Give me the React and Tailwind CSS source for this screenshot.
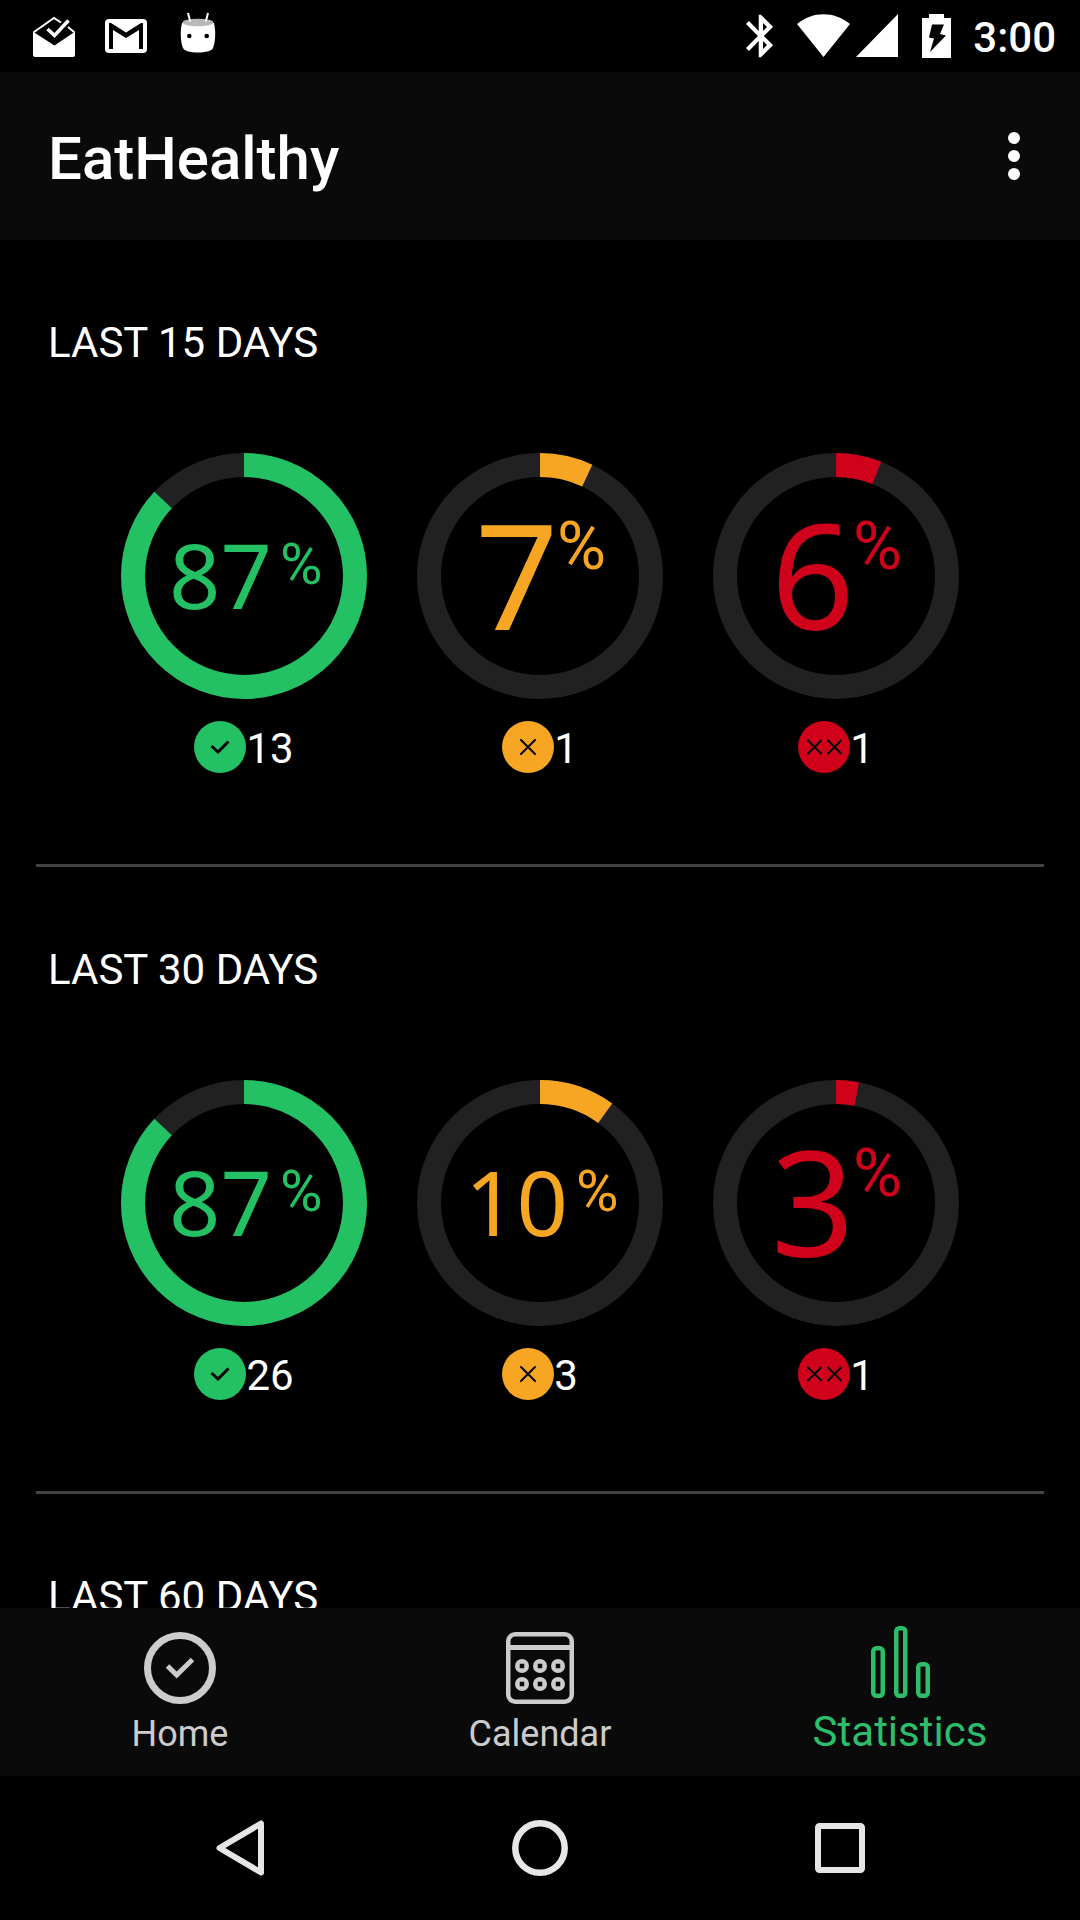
import React, { useState } from 'react';

const sections = [
    {
        title: 'LAST 15 DAYS',
        stats: [
            { type: 'good', percent: 87, count: 13 },
            { type: 'bad', percent: 7, count: 1 },
            { type: 'worse', percent: 6, count: 1 },
        ],
    },
    {
        title: 'LAST 30 DAYS',
        stats: [
            { type: 'good', percent: 87, count: 26 },
            { type: 'bad', percent: 10, count: 3 },
            { type: 'worse', percent: 3, count: 1 },
        ],
    },
    { title: 'LAST 60 DAYS', stats: [] },
];

const colors = {
    good: 'text-[#23c163]',
    bad: 'text-[#f7a624]',
    worse: 'text-[#d0021b]',
};

// Status bar on top of the screen
const StatusBar = () => (
    <div className="flex h-[72px] shrink-0 items-center justify-between bg-black pl-[33px] pr-6">
        <div className="flex gap-[30px]">
            <svg width="42" height="48" viewBox="0 0 42 48" fill="none">
                <path d="M0 19L2 21L21.5 33.5L40 21L42 19V43Q42 45 40 45H2Q0 45 0 43Z" fill="white" />
                <path d="M1 20L21 6L28 10.500M35 15L41 20" stroke="white" strokeWidth="2" />
                <path d="M14.500 17L21.500 23.500L35.500 8.500" stroke="white" strokeWidth="3.500" />
            </svg>
            <svg width="42" height="48" viewBox="0 0 42 48">
                <rect y="7" width="42" height="34" rx="4" fill="white" />
                <path d="M4 37V11H6L21 20.500L36 11H38V37H34V18L21 26L8 18V37Z" fill="black" />
            </svg>
            <svg width="42" height="48" viewBox="0 0 42 48">
                <path d="M5 11C3 19 3.500 30 6 36C8 42 34 42 36 36C38.500 30 39 19 37 11Z" fill="white" />
                <ellipse cx="21" cy="10.500" rx="15.500" ry="3.800" fill="#b8b8b8" />
                <path d="M11 1L13.200 9.500M31 1L28.800 9.500" stroke="white" strokeWidth="2" />
                <circle cx="12.300" cy="24" r="2.300" fill="black" />
                <circle cx="29.700" cy="24" r="2.300" fill="black" />
            </svg>
        </div>
        <div className="flex items-center">
            <svg width="27" height="44" viewBox="5 2 12.700 20" fill="white">
                <path d="M17.710 7.710L12 2h-1v7.590L6.410 5 5 6.410 10.590 12 5 17.590 6.410 19 11 14.410V22h1l5.710-5.710-4.300-4.290 4.300-4.290zM13 5.830l1.880 1.880L13 9.590V5.830zm1.880 10.460L13 18.170v-3.760l1.880 1.880z" />
            </svg>
            <svg className="ml-6" width="53" height="44" viewBox="0 0 53 44" fill="white">
                <path d="M0 10C16 -3 37 -3 53 10L26.500 43Z" />
            </svg>
            <svg className="ml-[6px]" width="42" height="44" viewBox="0 0 42 44" fill="white">
                <path d="M42 0V43H0Z" />
            </svg>
            <svg className="ml-6" width="29" height="44" viewBox="0 0 29 44">
                <path d="M7 0H22V4H29V44H0V4H7Z" fill="white" />
                <path d="M10 10.500H22L18 20L24 21.500L8 38L12 24.500L7 23.500Z" fill="black" />
            </svg>
            <span className="ml-[22px] pt-1 text-[42px] font-medium leading-[50px]">3:00</span>
        </div>
    </div>
);

const Header = () => (
    <header className="flex h-[168px] shrink-0 items-center justify-between bg-[#0a0a0a] px-12">
        <h1 className="pt-[6px] text-[60px] font-medium leading-[70px]">EatHealthy</h1>
        <button type="button" aria-label="More options">
            <svg width="36" height="48" viewBox="0 0 36 48" fill="white">
                <circle cx="18" cy="6" r="6" />
                <circle cx="18" cy="24" r="6" />
                <circle cx="18" cy="42" r="6" />
            </svg>
        </button>
    </header>
);

const Ring = ({ type, percent }) => {
    const twoDigits = percent > 9;

    return (
        <svg width="246" height="246" viewBox="0 0 246 246" className={colors[type]} fill="currentColor">
            <circle cx="123" cy="123" r="111" fill="none" stroke="#212121" strokeWidth="24" />
            <circle
                cx="123"
                cy="123"
                r="111"
                fill="none"
                stroke="currentColor"
                strokeWidth="24"
                pathLength="100"
                strokeDasharray={`${percent} 100`}
                transform="rotate(-90 123 123)"
            />
            <text
                x={twoDigits ? 48 : 58}
                y={twoDigits ? 156 : 177}
                className={`font-['Noto_Sans',sans-serif] ${twoDigits ? 'text-[90px]' : 'text-[146px]'}`}
            >
                {percent}
            </text>
            <text x={twoDigits ? 159 : 140} y={twoDigits ? 131 : 116} className={twoDigits ? 'text-[58px]' : 'text-[67px]'}>
                %
            </text>
        </svg>
    );
};

const Badge = ({ type }) => (
    <svg width="52" height="52" viewBox="0 0 52 52" className={colors[type]} fill="none">
        <circle cx="26" cy="26" r="26" fill="currentColor" />
        {type === 'good' && <path d="M17.500 25L24 31L34.500 20.500" stroke="black" strokeWidth="3" />}
        {type === 'bad' && <path d="M19 19L33 33M33 19L19 33" stroke="black" strokeWidth="2" strokeLinecap="round" />}
        {type === 'worse' && (
            <path d="M9.500 19L23.500 33M23.500 19L9.500 33M29.500 19L43.500 33M43.500 19L29.500 33" stroke="black" strokeWidth="2" />
        )}
    </svg>
);

const Section = ({ title, stats }) => (
    <section className="pt-[78px]">
        <h2 className="px-12 text-[42px] leading-[50px]">{title}</h2>
        {stats.length > 0 && (
            <>
                <div className="grid grid-cols-3 px-24 pb-[91px] pt-[85px]">
                    {stats.map((item) => (
                        <div key={item.type} className="flex flex-col items-center">
                            <Ring type={item.type} percent={item.percent} />
                            <div className="mt-[22px] flex items-end">
                                <Badge type={item.type} />
                                <span className="text-[42px] leading-[48px]">{item.count}</span>
                            </div>
                        </div>
                    ))}
                </div>
                <hr className="mx-9 border-t-[3px] border-[#424242]" />
            </>
        )}
    </section>
);

const HomeIcon = () => (
    <svg width="72" height="72" viewBox="0 0 72 72" fill="none" stroke="currentColor">
        <circle cx="36" cy="36" r="32.500" strokeWidth="7" />
        <path d="M23.500 34L32.700 43L48.500 27.500" strokeWidth="5" />
    </svg>
);

const CalendarIcon = () => (
    <svg width="72" height="72" viewBox="0 0 72 72" fill="none">
        <rect x="4.250" y="2.250" width="63.500" height="67.500" rx="7" stroke="currentColor" strokeWidth="4.500" />
        <path d="M4 15.500H68" stroke="currentColor" strokeWidth="5" />
        {[34, 52].map((y) =>
            [18, 36, 54].map((x) => (
                <g key={`${x}-${y}`}>
                    <circle cx={x} cy={y} r="7" fill="currentColor" />
                    <rect x={x - 2.25} y={y - 2.25} width="4.500" height="4.500" fill="#0a0a0a" />
                </g>
            ))
        )}
    </svg>
);

const StatisticsIcon = () => (
    <svg width="72" height="72" viewBox="0 0 72 72" fill="none" stroke="currentColor" strokeWidth="4.500">
        <rect x="9.250" y="22.250" width="9.500" height="47.500" rx="3" />
        <rect x="32.250" y="2.250" width="9" height="67.500" rx="3" />
        <rect x="54.250" y="38.250" width="9.500" height="31.500" rx="3" />
    </svg>
);

const tabs = [
    { name: 'Home', Icon: HomeIcon },
    { name: 'Calendar', Icon: CalendarIcon },
    { name: 'Statistics', Icon: StatisticsIcon },
];

const TabBar = () => {
    const [active, setActive] = useState('Statistics');

    return (
        <nav className="grid h-[168px] shrink-0 grid-cols-3 bg-[#0a0a0a]">
            {tabs.map(({ name, Icon }) => (
                <button
                    key={name}
                    type="button"
                    onClick={() => setActive(name)}
                    className={`flex flex-col items-center gap-[9px] ${
                        active === name
                            ? 'pt-[18px] text-[42px] leading-[50px] text-[#2dbe6c]'
                            : 'pt-6 text-[36px] leading-[42px] text-[#cccccc]'
                    }`}
                >
                    <Icon />
                    <span>{name}</span>
                </button>
            ))}
        </nav>
    );
};

// Android back, home and recent apps buttons
const SystemBar = () => (
    <div className="grid h-36 shrink-0 grid-cols-3 place-items-center bg-black px-[90px]">
        <button type="button" aria-label="Back">
            <svg width="56" height="56" viewBox="0 0 56 56" fill="none" stroke="#e6e6e6" strokeWidth="6">
                <path d="M7.500 28L49 3.500V52.500Z" strokeLinejoin="round" />
            </svg>
        </button>
        <button type="button" aria-label="Home screen">
            <svg width="56" height="56" viewBox="0 0 56 56" fill="none" stroke="#e6e6e6" strokeWidth="6.500">
                <circle cx="28" cy="28" r="24.700" />
            </svg>
        </button>
        <button type="button" aria-label="Recent apps">
            <svg width="56" height="56" viewBox="0 0 56 56" fill="none" stroke="#e6e6e6" strokeWidth="6">
                <rect x="6" y="6" width="44" height="44" rx="1.500" />
            </svg>
        </button>
    </div>
);

const App = () => {
    return (
        <div className="flex h-screen flex-col bg-black font-['Roboto',sans-serif] text-white">
            <StatusBar />
            <Header />
            <main className="min-h-0 flex-1 overflow-hidden">
                {sections.map((section) => (
                    <Section key={section.title} title={section.title} stats={section.stats} />
                ))}
            </main>
            <TabBar />
            <SystemBar />
        </div>
    );
};

export default App;
